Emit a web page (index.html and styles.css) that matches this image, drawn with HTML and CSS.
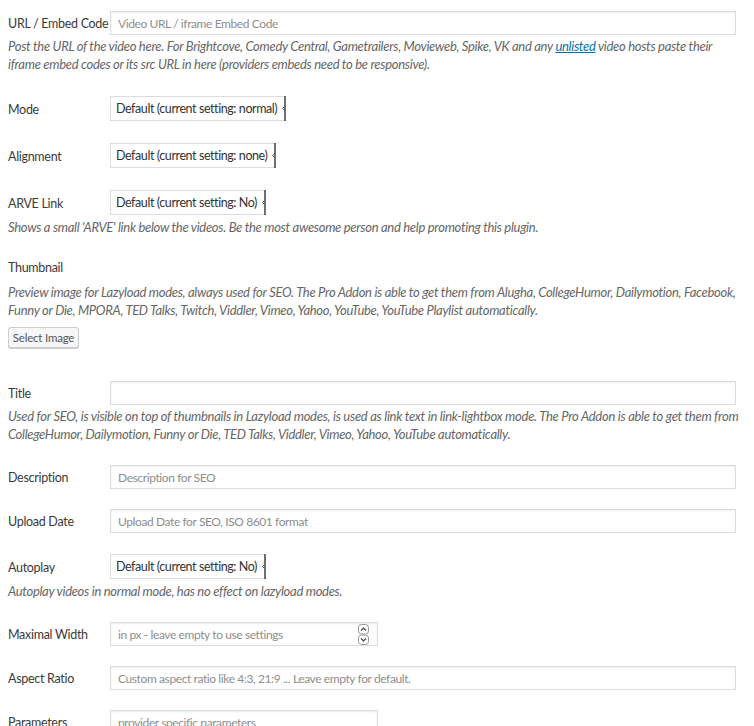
FILE: index.html
```html
<!DOCTYPE html>
<html>
<head>
<meta charset="utf-8">
<link rel="stylesheet" href="styles.css">
</head>
<body>
<div class="wrap">
  <div class="group">
    <div class="row">
      <label class="label">URL / Embed Code</label>
      <div class="input wide"><span class="ph">Video URL / iframe Embed Code</span></div>
    </div>
    <p class="desc">Post the URL of the video here. For Brightcove, Comedy Central, Gametrailers, Movieweb, Spike, VK and any <a href="#" class="link">unlisted</a> video hosts paste their<br>iframe embed codes or its src URL in here (providers embeds need to be responsive).</p>
  </div>

  <div class="group">
    <div class="row">
      <label class="label">Mode</label>
      <div class="select"><span class="sel-text">Default (current setting: normal)</span><span class="sel-arrow"><svg width="6" height="25" viewBox="0 0 6 25"><path d="M5 0V25" stroke="#333" stroke-width="1.4" fill="none"/><path d="M4.5 10.5 L2.5 12.5 L4.5 14.5" stroke="#555" stroke-width="1" fill="none"/></svg></span></div>
    </div>
  </div>

  <div class="group">
    <div class="row">
      <label class="label">Alignment</label>
      <div class="select"><span class="sel-text">Default (current setting: none)</span><span class="sel-arrow"><svg width="6" height="25" viewBox="0 0 6 25"><path d="M5 0V25" stroke="#333" stroke-width="1.4" fill="none"/><path d="M4.5 10.5 L2.5 12.5 L4.5 14.5" stroke="#555" stroke-width="1" fill="none"/></svg></span></div>
    </div>
  </div>

  <div class="group">
    <div class="row">
      <label class="label">ARVE Link</label>
      <div class="select"><span class="sel-text">Default (current setting: No)</span><span class="sel-arrow"><svg width="6" height="25" viewBox="0 0 6 25"><path d="M5 0V25" stroke="#333" stroke-width="1.4" fill="none"/><path d="M4.5 10.5 L2.5 12.5 L4.5 14.5" stroke="#555" stroke-width="1" fill="none"/></svg></span></div>
    </div>
    <p class="desc">Shows a small 'ARVE' link below the videos. Be the most awesome person and help promoting this plugin.</p>
  </div>

  <div class="group">
    <div class="row solo">
      <label class="label">Thumbnail</label>
    </div>
    <p class="desc desc-gap">Preview image for Lazyload modes, always used for SEO. The Pro Addon is able to get them from Alugha, CollegeHumor, Dailymotion, Facebook,<br>Funny or Die, MPORA, TED Talks, Twitch, Viddler, Vimeo, Yahoo, YouTube, YouTube Playlist automatically.</p>
    <button class="button" type="button">Select Image</button>
  </div>

  <div class="group">
    <div class="row">
      <label class="label">Title</label>
      <div class="input wide"></div>
    </div>
    <p class="desc"><span class="loose">Used for SEO, is visible on top of thumbnails in Lazyload modes, is used as link text in link-lightbox mode. The Pro Addon is able to get them from</span><br>CollegeHumor, Dailymotion, Funny or Die, TED Talks, Viddler, Vimeo, Yahoo, YouTube automatically.</p>
  </div>

  <div class="group">
    <div class="row">
      <label class="label">Description</label>
      <div class="input wide"><span class="ph">Description for SEO</span></div>
    </div>
  </div>

  <div class="group">
    <div class="row">
      <label class="label">Upload Date</label>
      <div class="input wide"><span class="ph">Upload Date for SEO, ISO 8601 format</span></div>
    </div>
  </div>

  <div class="group">
    <div class="row">
      <label class="label">Autoplay</label>
      <div class="select"><span class="sel-text">Default (current setting: No)</span><span class="sel-arrow"><svg width="6" height="25" viewBox="0 0 6 25"><path d="M5 0V25" stroke="#333" stroke-width="1.4" fill="none"/><path d="M4.5 10.5 L2.5 12.5 L4.5 14.5" stroke="#555" stroke-width="1" fill="none"/></svg></span></div>
    </div>
    <p class="desc">Autoplay videos in normal mode, has no effect on lazyload modes.</p>
  </div>

  <div class="group">
    <div class="row">
      <label class="label">Maximal Width</label>
      <div class="input short number"><span class="ph">in px - leave empty to use settings</span>
        <svg class="spin" width="11" height="21" viewBox="0 0 11 21">
          <rect x="0.5" y="0.5" width="10" height="9.5" rx="3" fill="#fff" stroke="#999"/>
          <rect x="0.5" y="11" width="10" height="9.5" rx="3" fill="#fff" stroke="#999"/>
          <path d="M3 6.5 L5.5 4 L8 6.5" stroke="#444" stroke-width="1.2" fill="none"/>
          <path d="M3 14.5 L5.5 17 L8 14.5" stroke="#444" stroke-width="1.2" fill="none"/>
        </svg>
      </div>
    </div>
  </div>

  <div class="group">
    <div class="row">
      <label class="label">Aspect Ratio</label>
      <div class="input wide"><span class="ph">Custom aspect ratio like 4:3, 21:9 ... Leave empty for default.</span></div>
    </div>
  </div>

  <div class="group">
    <div class="row">
      <label class="label">Parameters</label>
      <div class="input short"><span class="ph">provider specific parameters</span></div>
    </div>
  </div>
</div>
</body>
</html>
```
FILE: styles.css
```css
html, body {
  margin: 0;
  padding: 0;
  background: #fff;
}
body {
  font-family: Lato, "Liberation Sans", sans-serif;
  font-size: 12.5px;
  color: #444;
}
.wrap {
  padding: 1px 8px 0 8px;
}
.group {
  padding: 10px 0;
}
.row {
  display: flex;
  align-items: center;
}
.row.solo {
  height: 18px;
}
.label {
  width: 102px;
  flex: none;
  line-height: 18px;
  letter-spacing: -0.3px;
  color: #3a3a3a;
  position: relative;
  top: 1px;
}
.input {
  box-sizing: border-box;
  height: 24px;
  border: 1px solid #dcdcdc;
  box-shadow: inset 0 1px 2px rgba(0,0,0,0.07);
  background: #fff;
  display: flex;
  align-items: center;
  padding: 0 7px;
  flex: none;
  font-size: 12px;
}
.input.wide {
  width: 626px;
}
.input.short {
  width: 268px;
}
.input.number {
  justify-content: space-between;
  padding-right: 8px;
}
.ph {
  color: #8e8e8e;
  letter-spacing: -0.4px;
  white-space: nowrap;
}
.spin {
  display: block;
  flex: none;
}
.select {
  box-sizing: border-box;
  height: 25px;
  margin: 1px 0;
  display: inline-flex;
  align-items: center;
  border: 1px solid #dcdcdc;
  border-right: 0;
  background: #fff;
  padding-left: 5px;
  flex: none;
}
.sel-text {
  color: #333;
  letter-spacing: -0.42px;
  white-space: nowrap;
}
.sel-arrow {
  display: block;
  margin-left: 3px;
  height: 25px;
  margin-top: -1px;
  margin-bottom: -1px;
}
.sel-arrow svg {
  display: block;
}
.desc {
  margin: 2px 0;
  font-style: italic;
  color: #666;
  line-height: 18px;
  font-size: 13px;
  letter-spacing: -0.3px;
}
.desc .loose {
  letter-spacing: -0.28px;
  white-space: nowrap;
}
.desc-gap {
  margin-top: 7px;
}
.link {
  color: #0073aa;
  text-decoration: underline;
}
.button {
  display: block;
  margin: 8px 0 13px 0;
  box-sizing: border-box;
  height: 21px;
  width: 71px;
  padding: 0;
  font-family: Lato, "Liberation Sans", sans-serif;
  font-size: 11.5px;
  letter-spacing: -0.2px;
  color: #555;
  background: #f7f7f7;
  border: 1px solid #cccccc;
  border-radius: 3px;
  box-shadow: 0 1px 0 #cccccc;
}
```
